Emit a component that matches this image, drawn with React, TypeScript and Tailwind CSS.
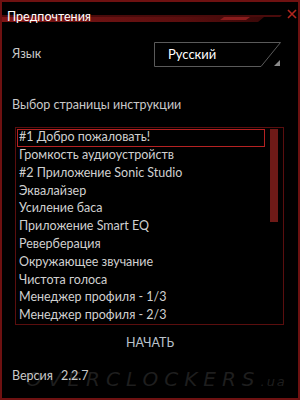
import React, { useState } from 'react';

const pages = [
    '#1 Добро пожаловать!',
    'Громкость аудиоустройств',
    '#2 Приложение Sonic Studio',
    'Эквалайзер',
    'Усиление баса',
    'Приложение Smart EQ',
    'Реверберация',
    'Окружающее звучание',
    'Чистота голоса',
    'Менеджер профиля - 1/3',
    'Менеджер профиля - 2/3',
];

const App: React.FC = () => {
    const [selected, setSelected] = useState(0);

    return (
        <div
            className="relative w-[300px] h-[400px] bg-black border-2 border-[#6e1111] overflow-hidden text-[#c9c9c9]"
            style={{ fontFamily: 'Lato, "Open Sans", sans-serif' }}
        >
            {/* Title bar */}
            <div className="relative h-[28px]">
                <svg className="absolute left-0 top-[13px]" width="282" height="8" viewBox="0 0 282 8">
                    <defs>
                        <linearGradient id="stripe" x1="0" x2="1" y1="0" y2="0">
                            <stop offset="0" stopColor="#801616" />
                            <stop offset="0.7" stopColor="#5a0e0e" />
                            <stop offset="1" stopColor="#3a0808" />
                        </linearGradient>
                    </defs>
                    <polygon points="0,0 280,0 278,2 0,2" fill="#4a0b0b" />
                    <polygon points="0,2 262,2 256,7 0,7" fill="url(#stripe)" />
                    <polygon points="222,2 248,2 244,5 218,5" fill="#8a1c1c" />
                </svg>
                <span className="absolute left-[5px] top-[6px] text-[12.5px] text-white">Предпочтения</span>
                <svg className="absolute right-[1px] top-[7px]" width="10" height="10" viewBox="0 0 10 10">
                    <path d="M1 1 L9 9 M9 1 L1 9" stroke="#b3261e" strokeWidth="1.6" />
                </svg>
            </div>

            {/* Language */}
            <div className="flex items-center justify-between pl-[10px] pr-[17px] mt-[12px]">
                <span className="text-[12.5px]">Язык</span>
                <div className="relative w-[127px] h-[25px] flex items-center pl-[14px]">
                    <svg className="absolute inset-0" width="127" height="25" viewBox="0 0 127 25">
                        <polygon points="0.5,0.5 126.5,0.5 107,24.5 0.5,24.5" fill="none" stroke="#5a5a5a" />
                        <polygon points="126,18 126,24 120,24" fill="#8a8a8a" />
                    </svg>
                    <span className="relative text-[13px] text-white">Русский</span>
                </div>
            </div>

            {/* Instruction page selector */}
            <div className="pl-[10px] mt-[29px] text-[12.5px]">Выбор страницы инструкции</div>

            <div className="ml-[13px] mr-[14px] mt-[12px] h-[198px] border border-[#5a0e0e] flex">
                <div className="flex-1 pl-[1px] pt-[1px] overflow-hidden">
                    {pages.map((p, i) => (
                        <div
                            key={p}
                            onClick={() => setSelected(i)}
                            className={`h-[17.8px] flex items-center pl-[1px] text-[12.5px] whitespace-nowrap text-[#d0d0d0] border ${selected === i ? 'border-[#b52222]' : 'border-transparent'}`}
                        >
                            {p}
                        </div>
                    ))}
                </div>
                <div className="w-[18px] pl-[5px] pr-[5px] pt-[1px]">
                    <div className="h-[93px] bg-[#6e1a17]" />
                </div>
            </div>

            <div className="text-center mt-[9px] text-[12.5px] text-[#b9c2cc]">НАЧАТЬ</div>

            <div className="relative mt-[14px] pl-[10px] text-[12.5px]">
                <span
                    className="absolute left-[24px] top-[-3px] text-[20px] italic tracking-[6px] text-[#1e1e1e] whitespace-nowrap"
                    style={{ fontFamily: '"DejaVu Sans", sans-serif' }}
                >
                    OVERCLOCKERS<span className="text-[13px] tracking-[2px]">.ua</span>
                </span>
                <span className="relative">Версия</span>
                <span className="relative ml-[8px]">2.2.7</span>
            </div>
        </div>
    );
};

export default App;
